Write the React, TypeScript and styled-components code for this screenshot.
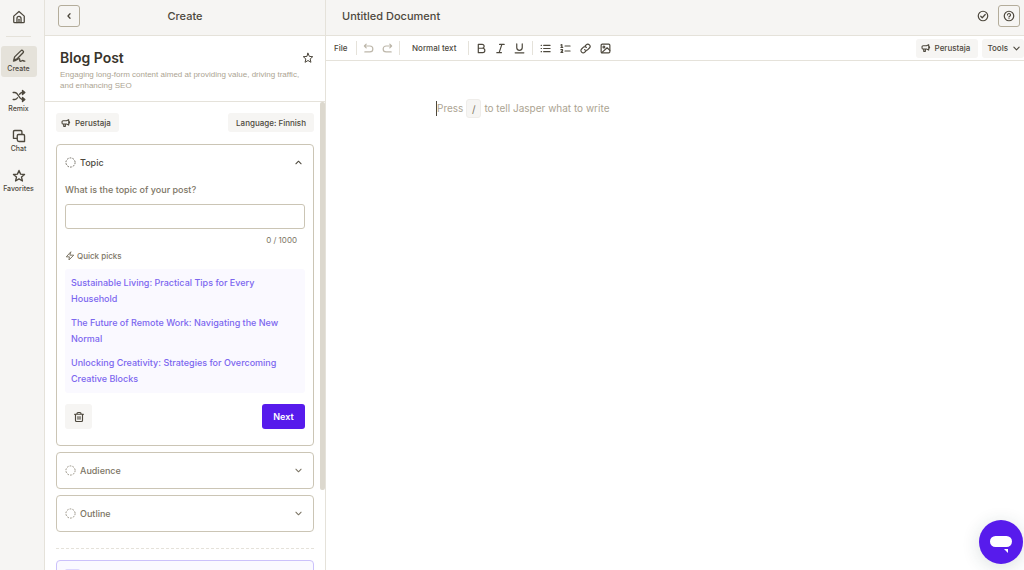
import React, { ReactNode } from 'react';
import styled, { createGlobalStyle } from 'styled-components';

const GlobalStyle = createGlobalStyle`
  *, *::before, *::after { box-sizing: border-box; }
  html, body { margin: 0; padding: 0; background: #fff; }
  body, button, input { font-family: Inter, "Liberation Sans", sans-serif; }
  button { cursor: pointer; }
  h1, h2, p, ul { margin: 0; padding: 0; }
`;

const ink = '#4d483d';
const muted = '#7c7565';
const faint = '#aca492';
const line = '#e5e2da';
const edge = '#cbc5b5';
const surface = '#f6f5f3';
const violet = '#571bec';

const Svg = styled.svg<{ $size: number; $weight?: number }>`
  display: block;
  flex: none;
  width: ${p => p.$size}px;
  height: ${p => p.$size}px;
  fill: none;
  stroke: currentColor;
  stroke-width: ${p => p.$weight ?? 2};
  stroke-linecap: round;
  stroke-linejoin: round;
`;

const shapes = {
  home: <><path d="M3 10.500 12 2.500l9 8V20a1.500 1.500 0 0 1-1.500 1.500h-15A1.500 1.500 0 0 1 3 20z" /><path d="M8.500 21.500V14.500a3.500 3.500 0 0 1 7 0v7" /><path d="M12 16v5" /></>,
  create: <><path d="M3 19l1.500-5.500L15.500 2.800a2 2 0 0 1 3 0l.5.500a2 2 0 0 1 0 3L8.500 17z" /><path d="M2.500 20.500c5-.5 8-4.500 10-4s-.5 4.500 2 4.500 3-2 4.500-1 2 1 3 .8" /></>,
  remix: <><path d="M2 6h3c6 0 7 12 13 12h2M2 18h3c2 0 3.400-1.300 4.500-3M13 9c1.300-1.900 2.700-3 5-3h2" /><path d="M18 2.500 22 6l-4 3.500zM18 14.500l4 3.500-4 3.500z" fill="currentColor" /></>,
  chat: <><path d="M8 16H2.500V4.500a2 2 0 0 1 2-2H15a2 2 0 0 1 2 2V9" /><path d="M11 9.500h8.500a2 2 0 0 1 2 2V21.500H12a3 3 0 0 1-3-3v-7a2 2 0 0 1 2-2z" /></>,
  star: <path d="m12 2.500 2.700 6.300 6.800.6-5.200 4.500 1.600 6.700-5.900-3.600-5.900 3.600 1.600-6.700L2.500 9.400l6.800-.6z" />,
  horn: <><path d="M18.500 4v13M18.500 4 13 6.500H5a2.500 2.500 0 0 0-2.500 2.500v3A2.500 2.500 0 0 0 5 14.500h8l5.500 2.500M6.500 14.500V20h4v-5.500M18.500 8.500a2.200 2.200 0 0 1 0 4.500" /></>,
  left: <path d="m14.500 6.500-5 5.500 5 5.500" />,
  up: <path d="m5 15.500 7-7 7 7" />,
  down: <path d="m5 8.500 7 7 7-7" />,
  pending: <circle cx="12" cy="12" r="10" strokeDasharray="3.800 2.483" strokeLinecap="butt" />,
  bolt: <path d="M13.500 2.500 3 14h7.500l-1 7.500L21 10h-8.500z" />,
  trash: <path d="M3 6.500h18M8 6.500V5a2 2 0 0 1 2-2h4a2 2 0 0 1 2 2v1.500M5 6.500V19a2 2 0 0 0 2 2h10a2 2 0 0 0 2-2V6.500M10 11v5.500M14 11v5.500" />,
  check: <><circle cx="12" cy="12" r="9.500" /><path d="m7.500 12.500 3 3 6-6.500" /></>,
  help: <><circle cx="12" cy="12" r="9.500" /><path d="M9 10a3 3 0 1 1 4 2.800c-.7.300-1 .7-1 1.400M12 17v.2" /></>,
  undo: <path d="M7 2.500 3 6.500l4 4M3 6.500h12a6 6 0 0 1 0 13H4" />,
  redo: <path d="m17 2.500 4 4-4 4M21 6.500H9a6 6 0 0 0 0 13h11" />,
  bold: <path d="M5 3h8.500a4.200 4.200 0 0 1 0 8.500H5zM5 11.500h9.500a4.700 4.700 0 0 1 0 9.500H5z" />,
  italic: <path d="M10 3h10M4 21h10M15 3 9 21" />,
  underline: <path d="M6 2v8a6 6 0 0 0 12 0V2M2.500 21.500h19" />,
  bullets: <path d="M8 5h14M8 12h14M8 19h14M2.500 5h.8M2.500 12h.8M2.500 19h.8" />,
  numbers: <path d="M11 6.500h11M11 17.500h11M2 4.500l2-1v6M2 9.500h4M2 14.500h3.500v2.500L2 20.500h4" />,
  link: <path d="M10 14.500a5 5 0 0 0 7 0l3.500-3.500a4.900 4.900 0 0 0-7-7L11.500 6M14 9.500a5 5 0 0 0-7 0L3.500 13a4.900 4.900 0 0 0 7 7l2-2" />,
  image: <><rect x="2.500" y="2.500" width="19" height="19" rx="2.500" /><circle cx="8.500" cy="8.500" r="2" /><path d="m4 21 11.500-10.500 6 5.500" /></>,
};

function Icon({ name, size = 12, weight }: { name: keyof typeof shapes; size?: number; weight?: number }) {
  return <Svg viewBox="0 0 24 24" $size={size} $weight={weight} aria-hidden="true">{shapes[name]}</Svg>;
}

const Shell = styled.div`
  display: flex;
  height: 100vh;
  overflow: hidden;
  color: ${ink};
`;

const Rail = styled.nav`
  display: flex;
  flex-direction: column;
  align-items: center;
  flex: none;
  width: 45px;
  padding: 10px 7px 0 0;
  background: ${surface};
  border-right: 1px solid ${line};
`;

const RailRule = styled.hr`
  width: 25px;
  height: 1px;
  margin: 12px 0 9px;
  border: 0;
  background: ${line};
`;

const RailItem = styled.a<{ $active?: boolean }>`
  display: flex;
  flex-direction: column;
  align-items: center;
  gap: 1px;
  width: 36px;
  height: 31px;
  margin-bottom: 9px;
  padding-top: 3px;
  border-radius: 3px;
  background: ${p => (p.$active ? '#e5e2da' : 'transparent')};
  color: ${ink};
  font-size: 7px;
  font-weight: 500;
  line-height: 9px;
  text-decoration: none;
`;

const HomeLink = styled.a`
  color: ${ink};
`;

const Panel = styled.aside`
  display: flex;
  flex-direction: column;
  flex: none;
  width: 281px;
  border-right: 1px solid ${line};
`;

const TopBar = styled.header`
  display: flex;
  align-items: center;
  flex: none;
  height: 36px;
  padding: 0 4px 3px 16px;
  background: ${surface};
  border-bottom: 1px solid ${line};
`;

const PanelBar = styled(TopBar)`
  display: grid;
  grid-template-columns: 22px 1fr 22px;
  padding: 0 13px 3px;
`;

const BarTitle = styled.h2<{ $center?: boolean }>`
  flex: 1;
  text-align: ${p => (p.$center ? 'center' : 'left')};
  font-size: 11px;
  font-weight: 500;
  line-height: 16px;
`;

const SquareButton = styled.button`
  display: grid;
  place-items: center;
  width: 22px;
  height: 22px;
  padding: 0;
  border: 1px solid #b4ad9b;
  border-radius: 3px;
  background: ${surface};
  color: ${ink};
`;

const PlainButton = styled.button<{ $dim?: boolean }>`
  display: grid;
  place-items: center;
  padding: 0;
  border: 0;
  background: none;
  color: ${p => (p.$dim ? '#bdb7aa' : ink)};
  font-size: 8px;
  font-weight: 500;
`;

const Intro = styled.div`
  flex: none;
  padding: 13px 11px 10px 15px;
  border-bottom: 1px solid ${line};
`;

const IntroRow = styled.div`
  display: flex;
  align-items: center;
  justify-content: space-between;
  margin-bottom: 2px;
`;

const IntroTitle = styled.h1`
  font-size: 14px;
  font-weight: 600;
  line-height: 18px;
  color: #39352c;
`;

const IntroText = styled.p`
  font-family: "Liberation Sans", Arial, sans-serif;
  font-size: 8px;
  line-height: 11px;
  color: ${faint};
`;

const ScrollArea = styled.div`
  display: flex;
  flex: 1;
  min-height: 0;
  overflow: hidden;
`;

const Form = styled.form`
  flex: 1;
  min-width: 0;
  padding: 11px 6px 0 11px;
`;

const ScrollTrack = styled.div`
  flex: none;
  width: 5px;
`;

const ScrollThumb = styled.div`
  height: 83%;
  border-radius: 2px;
  background: #dcd8ce;
`;

const ChipRow = styled.div`
  display: flex;
  justify-content: space-between;
  margin-bottom: 12px;
`;

const Chip = styled.button`
  display: flex;
  align-items: center;
  gap: 4px;
  height: 19px;
  padding: 0 8px 0 5px;
  border: 0;
  border-radius: 3px;
  background: ${surface};
  color: ${ink};
  font-size: 8px;
  font-weight: 500;
`;

const LanguageChip = styled(Chip)`
  padding: 0 8px;
`;

const Card = styled.section`
  margin-bottom: 6px;
  padding: 0 8px;
  border: 1px solid ${edge};
  border-radius: 4px;
`;

const CardHead = styled.button<{ $open?: boolean }>`
  display: flex;
  align-items: center;
  gap: 4px;
  width: 100%;
  height: 35px;
  padding: 0 2px 0 0;
  border: 0;
  background: none;
  color: ${p => (p.$open ? ink : muted)};
  font-size: 9px;
  font-weight: 500;
  text-align: left;
`;

const CardTitle = styled.span`
  flex: 1;
`;

const CardBody = styled.div`
  display: flex;
  flex-direction: column;
  padding: 3px 0 16px;
`;

const Question = styled.label`
  margin-bottom: 7px;
  font-size: 9px;
  font-weight: 500;
  line-height: 14px;
  color: ${muted};
`;

const TextBox = styled.input`
  width: 100%;
  height: 25px;
  padding: 0 8px;
  border: 1px solid ${edge};
  border-radius: 3px;
  background: #fff;
  font-size: 10px;
`;

const Counter = styled.p`
  margin: 6px 8px 5px 0;
  text-align: right;
  font-size: 8px;
  line-height: 10px;
  color: ${muted};
`;

const PicksTitle = styled.p`
  display: flex;
  align-items: center;
  gap: 2px;
  margin-bottom: 7px;
  font-size: 8px;
  font-weight: 500;
  line-height: 12px;
  color: ${muted};
`;

const Picks = styled.ul`
  display: flex;
  flex-direction: column;
  gap: 8px;
  margin-bottom: 11px;
  padding: 6px;
  border-radius: 3px;
  background: #faf9ff;
  list-style: none;
`;

const Pick = styled.button`
  display: block;
  padding: 0;
  border: 0;
  background: none;
  color: #7c67ef;
  font-size: 9px;
  font-weight: 500;
  line-height: 16px;
  text-align: left;
`;

const Actions = styled.div`
  display: flex;
  justify-content: space-between;
`;

const DeleteButton = styled.button`
  display: grid;
  place-items: center;
  width: 27px;
  height: 25px;
  padding: 0;
  border: 0;
  border-radius: 3px;
  background: ${surface};
  color: ${ink};
`;

const NextButton = styled(DeleteButton)`
  width: 43px;
  background: ${violet};
  color: #fff;
  font-size: 9px;
  font-weight: 600;
`;

const Divider = styled.hr`
  margin: 16px 0 11px;
  border: 0;
  border-top: 1px dashed ${line};
`;

const OutputCard = styled.section`
  height: 60px;
  padding: 8px;
  border: 1px solid #cbc1fb;
  border-radius: 4px;
  background: #faf9ff;
`;

const OutputTag = styled.div`
  width: 15px;
  height: 12px;
  border-radius: 2px;
  background: #ddd6fe;
`;

const Editor = styled.main`
  display: flex;
  flex-direction: column;
  flex: 1;
  min-width: 0;
`;

const TopActions = styled.div`
  display: flex;
  align-items: center;
  gap: 9px;
`;

const Toolbar = styled.div`
  display: flex;
  align-items: center;
  flex: none;
  height: 25px;
  padding-left: 8px;
  border-bottom: 1px solid ${line};
`;

const ToolGroup = styled.div<{ $pad: number; $gap?: number }>`
  display: flex;
  align-items: center;
  gap: ${p => p.$gap ?? 8}px;
  height: 14px;
  padding: 0 ${p => p.$pad}px;
  border-left: 1px solid ${line};
`;

const FileButton = styled(PlainButton)`
  width: 22px;
  justify-content: start;
`;

const ToolEnd = styled.div`
  display: flex;
  gap: 4px;
  margin-left: auto;
`;

const ToolsChip = styled(Chip)`
  padding: 0 3px 0 5px;
`;

const Page = styled.div`
  width: 100%;
  max-width: 478px;
  margin: 0 auto;
  padding: 38px 0 0;
`;

const Prompt = styled.p`
  display: flex;
  align-items: center;
  font-size: 10px;
  line-height: 19px;
  color: ${faint};
`;

const Caret = styled.span`
  width: 1px;
  height: 15px;
  background: ${ink};
`;

const Key = styled.kbd`
  display: grid;
  place-items: center;
  width: 15px;
  height: 19px;
  margin: 0 3px;
  border: 1px solid #efedea;
  border-radius: 3px;
  background: ${surface};
  font-family: inherit;
  color: ${muted};
`;

const ChatBubble = styled.button`
  position: fixed;
  right: 1px;
  bottom: 6px;
  width: 44px;
  height: 44px;
  padding: 0;
  border: 0;
  border-radius: 50%;
  background: ${violet};
  box-shadow: 0 3px 18px rgba(30, 60, 60, 0.16);
`;

const BubbleMark = styled.svg`
  display: block;
  width: 44px;
  height: 44px;
  fill: #fff;
`;

const nav: { icon: keyof typeof shapes; label: string }[] = [
  { icon: 'create', label: 'Create' },
  { icon: 'remix', label: 'Remix' },
  { icon: 'chat', label: 'Chat' },
  { icon: 'star', label: 'Favorites' },
];

const picks = [
  'Sustainable Living: Practical Tips for Every Household',
  'The Future of Remote Work: Navigating the New Normal',
  'Unlocking Creativity: Strategies for Overcoming Creative Blocks',
];

function Step({ title, open, children }: { title: string; open?: boolean; children?: ReactNode }) {
  return (
    <Card>
      <CardHead type="button" $open={open} aria-expanded={!!open}>
        <Icon name="pending" size={11} weight={1.7} />
        <CardTitle>{title}</CardTitle>
        <Icon name={open ? 'up' : 'down'} size={9} weight={2.8} />
      </CardHead>
      {children}
    </Card>
  );
}

function Tool({ name, label, dim }: { name: keyof typeof shapes; label: string; dim?: boolean }) {
  return <PlainButton type="button" aria-label={label} $dim={dim}><Icon name={name} size={11} weight={2.6} /></PlainButton>;
}

export default function App() {
  return (
    <Shell>
      <GlobalStyle />
      <Rail>
        <HomeLink href="#home" aria-label="Home"><Icon name="home" size={14} weight={2.2} /></HomeLink>
        <RailRule />
        {nav.map((item, i) => (
          <RailItem key={item.label} href={'#' + item.label.toLowerCase()} $active={i === 0}>
            <Icon name={item.icon} size={14} weight={2.3} />
            {item.label}
          </RailItem>
        ))}
      </Rail>

      <Panel>
        <PanelBar>
          <SquareButton type="button" aria-label="Back"><Icon name="left" size={10} weight={3} /></SquareButton>
          <BarTitle $center>Create</BarTitle>
        </PanelBar>
        <Intro>
          <IntroRow>
            <IntroTitle>Blog Post</IntroTitle>
            <PlainButton type="button" aria-label="Add to favorites"><Icon name="star" /></PlainButton>
          </IntroRow>
          <IntroText>Engaging long-form content aimed at providing value, driving traffic, and enhancing SEO</IntroText>
        </Intro>
        <ScrollArea>
          <Form>
            <ChipRow>
              <Chip type="button"><Icon name="horn" size={10} weight={2.6} />Perustaja</Chip>
              <LanguageChip type="button">Language: Finnish</LanguageChip>
            </ChipRow>
            <Step title="Topic" open>
              <CardBody>
                <Question htmlFor="topic">What is the topic of your post?</Question>
                <TextBox id="topic" type="text" maxLength={1000} />
                <Counter>0 / 1000</Counter>
                <PicksTitle><Icon name="bolt" size={10} weight={2.4} />Quick picks</PicksTitle>
                <Picks>
                  {picks.map(text => <li key={text}><Pick type="button">{text}</Pick></li>)}
                </Picks>
                <Actions>
                  <DeleteButton type="button" aria-label="Clear"><Icon name="trash" weight={2.3} /></DeleteButton>
                  <NextButton type="button">Next</NextButton>
                </Actions>
              </CardBody>
            </Step>
            <Step title="Audience" />
            <Step title="Outline" />
            <Divider />
            <OutputCard><OutputTag /></OutputCard>
          </Form>
          <ScrollTrack><ScrollThumb /></ScrollTrack>
        </ScrollArea>
      </Panel>

      <Editor>
        <TopBar>
          <BarTitle>Untitled Document</BarTitle>
          <TopActions>
            <PlainButton type="button" aria-label="Saved"><Icon name="check" weight={2.4} /></PlainButton>
            <SquareButton type="button" aria-label="Help"><Icon name="help" weight={2.4} /></SquareButton>
          </TopActions>
        </TopBar>
        <Toolbar>
          <FileButton type="button">File</FileButton>
          <ToolGroup $pad={6}>
            <Tool name="undo" label="Undo" dim />
            <Tool name="redo" label="Redo" dim />
          </ToolGroup>
          <ToolGroup $pad={12}><PlainButton type="button">Normal text</PlainButton></ToolGroup>
          <ToolGroup $pad={7}>
            <Tool name="bold" label="Bold" />
            <Tool name="italic" label="Italic" />
            <Tool name="underline" label="Underline" />
          </ToolGroup>
          <ToolGroup $pad={7} $gap={9}>
            <Tool name="bullets" label="Bulleted list" />
            <Tool name="numbers" label="Numbered list" />
            <Tool name="link" label="Link" />
            <Tool name="image" label="Image" />
          </ToolGroup>
          <ToolEnd>
            <Chip type="button"><Icon name="horn" size={10} weight={2.6} />Perustaja</Chip>
            <ToolsChip type="button">Tools<Icon name="down" size={9} weight={3} /></ToolsChip>
          </ToolEnd>
        </Toolbar>
        <Page>
          <Prompt><Caret />Press <Key>/</Key> to tell Jasper what to write</Prompt>
        </Page>
      </Editor>

      <ChatBubble type="button" aria-label="Open chat">
        <BubbleMark viewBox="0 0 44 44"><rect x="11" y="16" width="22" height="11" rx="5.500" /><path d="M25 29h4v4z" /></BubbleMark>
      </ChatBubble>
    </Shell>
  );
}
